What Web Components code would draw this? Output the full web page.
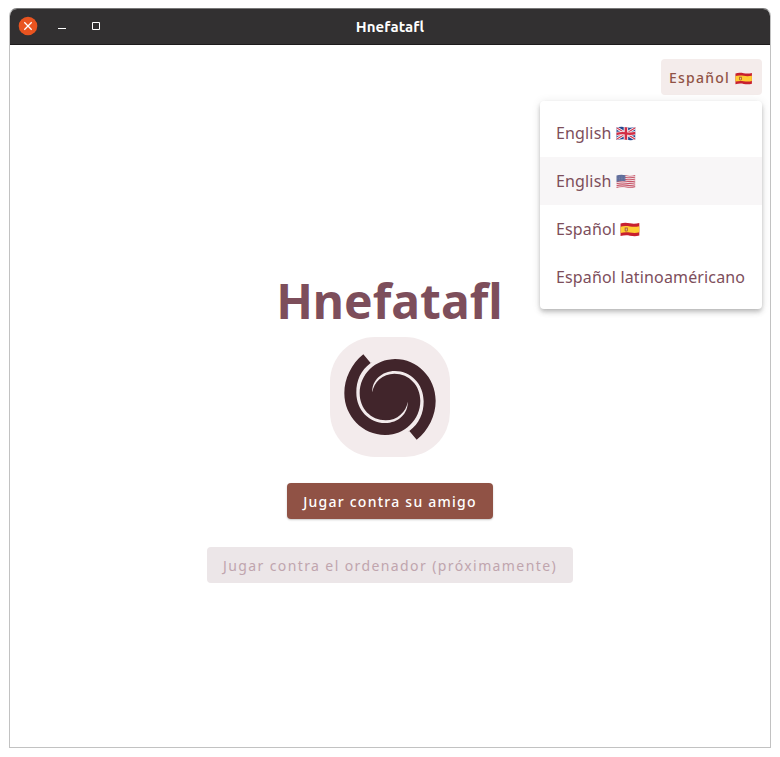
<!DOCTYPE html>
<html lang="es">
<head>
<meta charset="utf-8">
<title>Hnefatafl</title>
<style>
html,body{margin:0;height:100%;background:#fff}
body{font-family:"Noto Sans","Open Sans",sans-serif;box-sizing:border-box;padding:8px 9px 9px;height:757px;overflow:hidden}
</style>
</head>
<body>
<app-window heading="Hnefatafl">
  <language-picker></language-picker>
  <game-home></game-home>
</app-window>
<script>
function define(name, html, setup) {
  const t = document.createElement('template');
  t.innerHTML = html;
  customElements.define(name, class extends HTMLElement {
    connectedCallback() {
      if (this.shadowRoot) return;
      this.attachShadow({mode: 'open'}).append(t.content.cloneNode(true));
      if (setup) setup(this, this.shadowRoot);
    }
  });
}

/* Waving flags on a 19x15 grid */
const wave = 'M.5 1.600C3.500 .5 6.500 .7 9.500 1.300S15.500 1.800 18.500 1V13.400C15.500 14.400 12.500 14.200 9.500 13.600S3.500 13.200 .5 14Z';
const flags = {
  es: `<path fill="#c8202f" d="${wave}"/><path fill="#fc3" d="M.5 4.700C3.500 3.700 6.500 3.900 9.500 4.400S15.500 4.900 18.500 4.200V10.300C15.500 11.200 12.500 11 9.500 10.500S3.500 10.100 .5 10.900Z"/><path fill="#b5622b" d="M4.500 5.500h3v3.600q-1.500 1-3 0z"/><path fill="#ead09b" d="M5.500 6.500h1v2h-1z"/>`,
  gb: `<g clip-path="url(#w)"><path fill="#24468e" d="M0 0h19v15H0z"/><path stroke="#f3eef2" stroke-width="2.800" d="M0 1.500l19 12M0 13.500l19-12"/><path stroke="#d32c44" stroke-width="1" d="M0 1.500l19 12M0 13.500l19-12"/><path stroke="#f3eef2" stroke-width="4.300" d="M9.500 0v15" /><path stroke="#f3eef2" stroke-width="4" fill="none" d="M0 8C4 6.900 7 7 9.500 7.400S15 8 19 7"/><path stroke="#d32c44" stroke-width="2.400" fill="none" d="M9.500 0v15M0 8C4 6.900 7 7 9.500 7.400S15 8 19 7"/></g>`,
  us: `<g clip-path="url(#w)" opacity=".85"><path fill="#f1e6e9" d="M0 0h19v15H0z"/><g fill="none" stroke="#bf3a50" stroke-width="1.050">${[-5.8,-3.9,-2,-.1,1.8,3.7,5.6].map(y=>`<path transform="translate(0 ${y})" d="M0 8C4 6.900 7 7 9.500 7.400S15 8 19 7"/>`).join('')}</g><path fill="#45548a" d="M0 0h9v7.300C6 6.800 3 7.200 0 8z"/><path stroke="#8992b4" stroke-width=".5" stroke-dasharray=".6 1" d="M1.500 3h7M1.500 4.500h7M1.500 6h7"/></g>`
};
define('country-flag', `<style>:host{display:inline-block;width:1.24em;height:.94em;vertical-align:-.13em}svg{display:block;width:100%;height:100%}</style><svg viewBox="0 0 19 15" preserveAspectRatio="none"><defs><clipPath id="w"><path d="${wave}"/></clipPath></defs><g></g></svg>`,
  (el, r) => { r.querySelector('svg > g').innerHTML = flags[el.getAttribute('code')]; });

define('window-controls', `<style>:host{display:flex;align-items:center}svg{display:block}</style>
<svg width="110" height="36" viewBox="0 0 110 36"><circle cx="18" cy="17" r="9.300" fill="#e95420"/><path d="M14.300 13.300l7.400 7.400m0-7.400l-7.400 7.400" stroke="#fff" stroke-width="1.300"/><path d="M48 19.500h8" stroke="#fff"/><path d="M82.500 13.500h7v7h-7z" fill="none" stroke="#fff"/></svg>`);

define('app-window', `<style>
:host{display:flex;flex-direction:column;height:100%;box-sizing:border-box;border:1px solid #c2c2c2;border-top-color:#777;border-radius:8px 8px 0 0;overflow:hidden;background:#fff}
header{display:grid;grid-template-columns:1fr auto 1fr;align-items:center;height:36px;box-sizing:border-box;background:#323031;border-bottom:1px solid #1d1b1c;color:#fff;flex:none}
h1{margin:0;font:bold 15px/20px Ubuntu,"Noto Sans",sans-serif;letter-spacing:.1px}
main{flex:1;display:grid;min-height:0}
::slotted(*){grid-area:1/1}
</style><header><window-controls></window-controls><h1></h1><span></span></header><main><slot></slot></main>`,
 (el, r) => { r.querySelector('h1').textContent = el.getAttribute('heading'); });

define('action-button', `<style>
:host{display:block}
button{display:block;height:36px;border:0;border-radius:4px;padding:1px 16px 0;font:500 14px/35px "Noto Sans",sans-serif;letter-spacing:1.250px;white-space:nowrap;color:#fff;background:#905245;box-shadow:0 1px 2px rgba(0,0,0,.22)}
:host([kind=disabled]) button{background:#ece6e8;color:#c0a5ae;box-shadow:none;font-weight:400;letter-spacing:1.400px}
:host([kind=tonal]) button{background:#f4eceb;color:#905245;box-shadow:none;padding:1px 8px 0;width:101px;text-align:left}
:host([kind=tonal]) ::slotted(country-flag){vertical-align:-.16em}
</style><button><slot></slot></button>`);

define('menu-item', `<style>:host{display:block;height:48px;padding:0 16px;font-size:16px;line-height:48px;color:#7d4e5b;letter-spacing:.15px;white-space:nowrap}:host([active]){background:#f8f6f7}</style><slot></slot>`);

define('language-picker', `<style>
:host{position:relative;z-index:1;justify-self:end;align-self:start;margin:14px 8px 0 0}
nav{position:absolute;right:0;top:42px;width:222px;box-sizing:border-box;padding:8px 0;border-radius:4px;background:#fff;box-shadow:0 2px 4px -1px rgba(0,0,0,.16),0 4px 5px rgba(0,0,0,.12),0 1px 10px rgba(0,0,0,.1)}
</style><action-button kind="tonal">Español <country-flag code="es"></country-flag></action-button>
<nav><menu-item>English <country-flag code="gb"></country-flag></menu-item><menu-item active>English <country-flag code="us"></country-flag></menu-item><menu-item>Español <country-flag code="es"></country-flag></menu-item><menu-item>Español latinoaméricano</menu-item></nav>`);

define('spiral-logo', `<style>:host{display:block;width:120px;height:120px;border-radius:45px;background:#f3ebec}svg{display:block}</style>
<svg width="120" height="120" viewBox="30 21 360 360"><defs><path id="gap" d="M152 99C122 121 109 152 109 188C109 240 148 279 195 279C235 279 265 250 263 215C259 245 232 271 197 271C152 271 119 235 119 190C119 133 166 87 225 87L190 68Z"/></defs>
<path fill="#41252b" d="M130 73L152 99C172 90 198 87 225 87C292 87 347 143 347 212C347 256 326 300 290 329L268 303C248 312 222 315 195 315C128 315 73 259 73 190C73 146 94 102 130 73Z"/>
<g fill="#f3ebec"><use href="#gap"/><use href="#gap" transform="rotate(180 210 201)"/></g></svg>`);

define('game-home', `<style>
:host{display:flex;flex-direction:column;align-items:center;padding-top:224px}
h2{margin:0 1px 0 0;font:bold 48px/64px "Noto Sans",sans-serif;color:#7d4e5b}
spiral-logo{margin:4px 0 26px}
action-button + action-button{margin-top:28px}
</style><h2>Hnefatafl</h2><spiral-logo></spiral-logo><action-button>Jugar contra su amigo</action-button><action-button kind="disabled">Jugar contra el ordenador (próximamente)</action-button>`);
</script>
</body>
</html>
